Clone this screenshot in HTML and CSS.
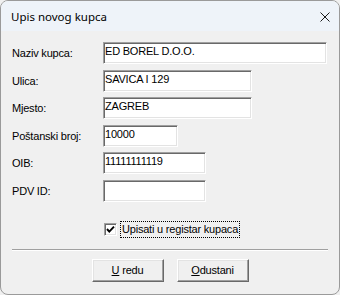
FILE: index.html
```html
<!DOCTYPE html>
<html lang="hr">
<head>
    <meta charset="UTF-8">
    <meta name="viewport" content="width=device-width, initial-scale=1.0">
    <title>Upis novog kupca</title>
    <link rel="stylesheet" href="styles.css">
</head>
<body>
    <div class="dialog">
        <div class="titlebar">
            <span class="title">Upis novog kupca</span>
            <span class="close">
                <svg width="10" height="10" viewBox="0 0 10 10">
                    <path d="M0.5 0.5 L9.5 9.5 M9.5 0.5 L0.5 9.5" stroke="#1b1b1b" stroke-width="1" fill="none"/>
                </svg>
            </span>
        </div>

        <div class="content">
            <div class="fields">
                <label>Naziv kupca:</label>
                <input class="field field-xl" type="text" value="ED BOREL D.O.O.">

                <label>Ulica:</label>
                <input class="field field-lg" type="text" value="SAVICA I 129">

                <label>Mjesto:</label>
                <input class="field field-lg" type="text" value="ZAGREB">

                <label>Poštanski broj:</label>
                <input class="field field-sm" type="text" value="10000">

                <label>OIB:</label>
                <input class="field field-md" type="text" value="11111111119">

                <label>PDV ID:</label>
                <input class="field field-md" type="text" value="">
            </div>

            <div class="register">
                <span class="checkbox">
                    <svg width="9" height="9" viewBox="0 0 9 9">
                        <polyline points="1,4 3.3,6.6 8,1.6" stroke="#000" stroke-width="1.9" fill="none"/>
                    </svg>
                </span>
                <span class="check-label">Upisati u registar kupaca</span>
            </div>

            <div class="separator"></div>

            <div class="actions">
                <button class="btn"><u>U</u> redu</button>
                <button class="btn"><u>O</u>dustani</button>
            </div>
        </div>
    </div>
</body>
</html>
```

FILE: styles.css
```css
body {
    margin: 0;
    background-color: #f0f0f0;
    font-family: "Liberation Sans", Arial, sans-serif;
    font-size: 11px;
    letter-spacing: -0.2px;
    color: #000000;
}

.dialog {
    box-sizing: border-box;
    width: 340px;
    height: 295px;
    border: 1px solid #9a9a9a;
    border-radius: 8px;
    background-color: #f0f0f0;
    overflow: hidden;
}

.titlebar {
    height: 30px;
    display: flex;
    align-items: center;
    justify-content: space-between;
    padding: 0 9px 0 10px;
    background-color: #eef3f9;
}

.title {
    font-family: "Noto Sans", sans-serif;
    font-size: 11.5px;
    letter-spacing: 0;
    color: #000000;
}

.close {
    display: flex;
    margin-top: 1px;
}

.content {
    padding: 11px 11px 0 11px;
}

.fields {
    display: grid;
    grid-template-columns: 91px auto;
    grid-auto-rows: 22px;
    row-gap: 5.6px;
    align-items: center;
    justify-items: start;
}

.field {
    box-sizing: border-box;
    height: 22px;
    padding: 0 2px 4px 1px;
    margin: 0;
    font-family: "Liberation Sans", Arial, sans-serif;
    font-size: 11px;
    letter-spacing: -0.2px;
    color: #000000;
    background-color: #ffffff;
    border: 1px solid;
    border-color: #a0a0a0 #ffffff #ffffff #a0a0a0;
    box-shadow: inset 1px 1px #696969, inset -1px -1px #e3e3e3;
    outline: none;
}

.field-xl {
    width: 224px;
}

.field-lg {
    width: 149px;
}

.field-md {
    width: 103px;
}

.field-sm {
    width: 75px;
}

.register {
    display: flex;
    align-items: center;
    height: 17px;
    margin-top: 19px;
    padding-left: 92px;
}

.checkbox {
    box-sizing: border-box;
    width: 13px;
    height: 13px;
    display: flex;
    align-items: center;
    justify-content: center;
    background-color: #ffffff;
    border: 1px solid;
    border-color: #a0a0a0 #ffffff #ffffff #a0a0a0;
    box-shadow: inset 1px 1px #696969, inset -1px -1px #e3e3e3;
}

.check-label {
    margin-left: 3px;
    padding: 1px 1px 2px 1px;
    border: 1px dotted #000000;
    line-height: 12px;
}

.separator {
    margin-top: 11px;
    border-top: 1px solid #a0a0a0;
    border-bottom: 1px solid #ffffff;
}

.actions {
    display: flex;
    justify-content: center;
    gap: 13px;
    margin-top: 8px;
}

.btn {
    box-sizing: border-box;
    width: 72px;
    height: 23px;
    padding: 0 0 1px 0;
    font-family: "Liberation Sans", Arial, sans-serif;
    font-size: 11px;
    letter-spacing: -0.2px;
    color: #000000;
    background-color: #f0f0f0;
    border: 1px solid;
    border-color: #ffffff #696969 #696969 #ffffff;
    box-shadow: inset -1px -1px #a0a0a0, inset 1px 1px #e3e3e3;
    cursor: pointer;
}
```
